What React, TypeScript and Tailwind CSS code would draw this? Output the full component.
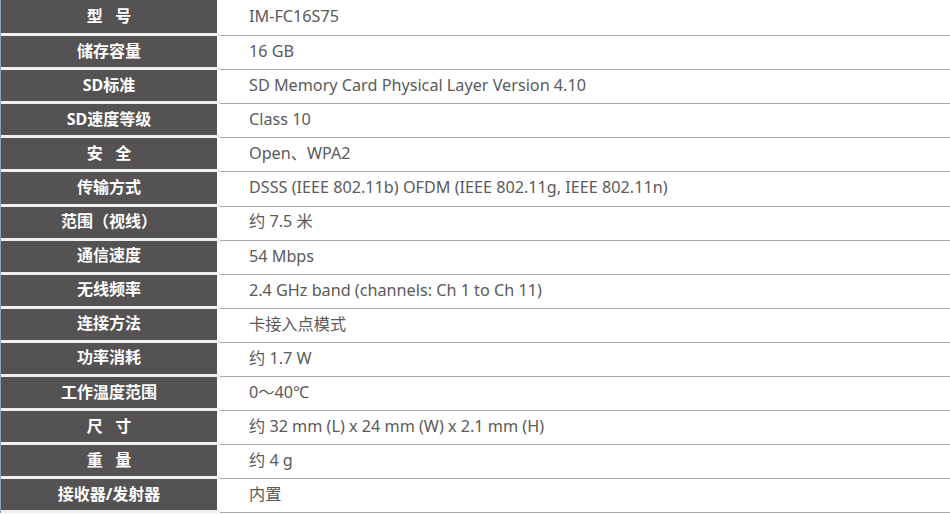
const specs = [
  ["型   号", "IM-FC16S75"],
  ["储存容量", "16 GB"],
  ["SD标准", "SD Memory Card Physical Layer Version 4.10"],
  ["SD速度等级", "Class 10"],
  ["安   全", "Open、WPA2"],
  ["传输方式", "DSSS (IEEE 802.11b) OFDM (IEEE 802.11g, IEEE 802.11n)"],
  ["范围（视线）", "约 7.5 米"],
  ["通信速度", "54 Mbps"],
  ["无线频率", "2.4 GHz band (channels: Ch 1 to Ch 11)"],
  ["连接方法", "卡接入点模式"],
  ["功率消耗", "约 1.7 W"],
  ["工作温度范围", "0～40℃"],
  ["尺   寸", "约 32 mm (L) x 24 mm (W) x 2.1 mm (H)"],
  ["重   量", "约 4 g"],
  ["接收器/发射器", "内置"],
];

export default function App() {
  return (
    <div className="w-[950px] h-[514px] overflow-hidden bg-white font-['Noto_Sans','Noto_Sans_CJK_SC',sans-serif]">
      {specs.map(([label, value], i) => (
        <div key={label} className={`flex ${i === 0 ? "h-[36.1px]" : "h-[34.1px]"}`}>
          <div className="flex w-[220px] shrink-0 flex-col border-l border-[#8ea0bb]">
            <div className="flex flex-1 items-center justify-center w-[216px] bg-[#545252] pb-[2px] whitespace-pre text-[16px] font-bold text-white">
              {label}
            </div>
            <div className="h-[3px] bg-[#efefef]" />
          </div>
          <div className="flex flex-1 items-center border-b border-[#a9a9a9] pl-[29px] pb-[3px] text-[16.2px] text-[#5a5a5a]">
            {value}
          </div>
        </div>
      ))}
    </div>
  );
}
